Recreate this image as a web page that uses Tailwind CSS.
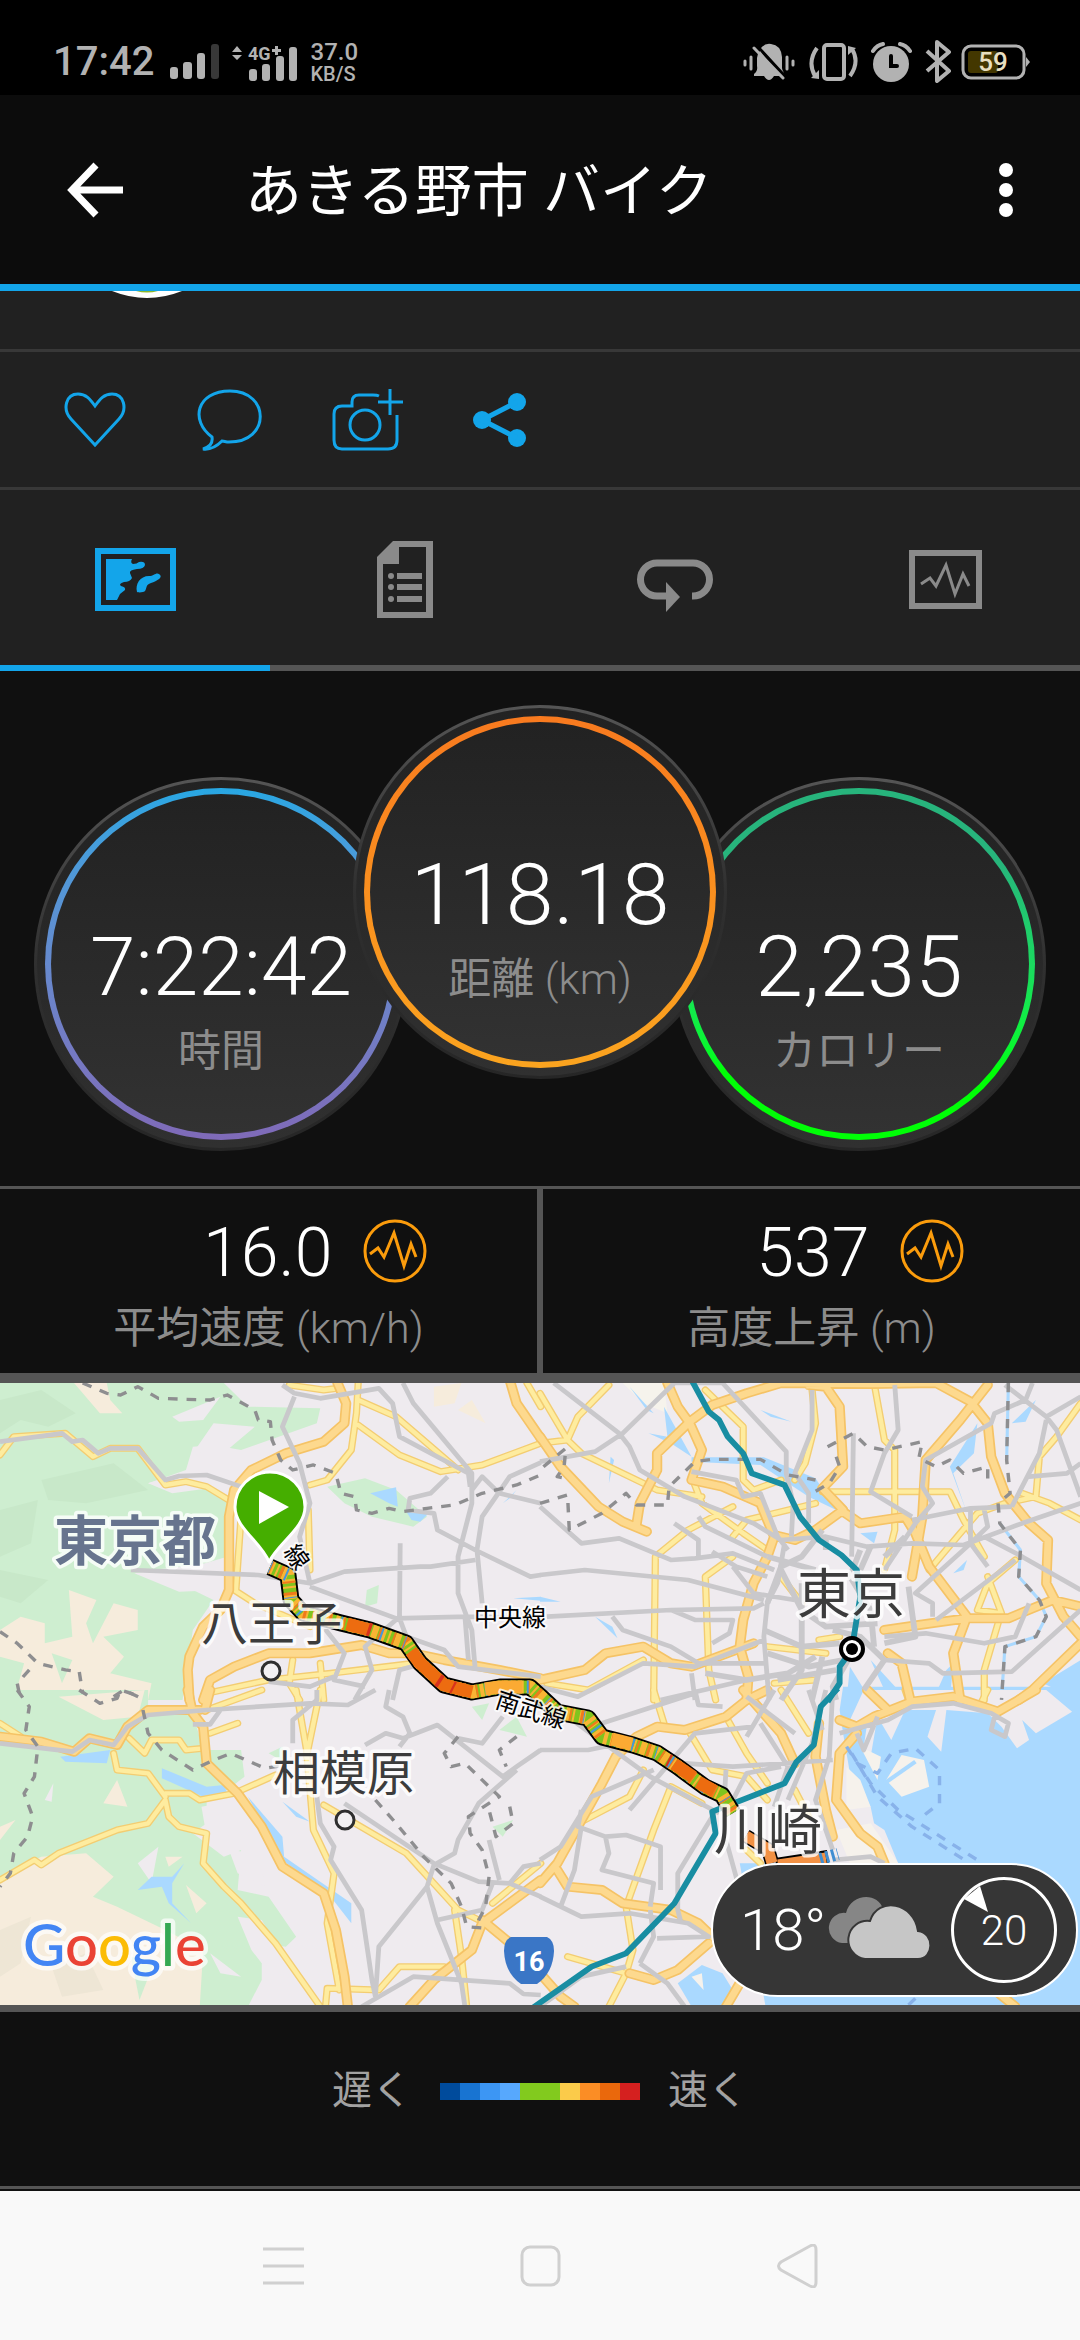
<!DOCTYPE html>
<html lang="ja">

<head>
  <meta charset="utf-8">
  <meta name="viewport" content="width=device-width, initial-scale=1">
  <title>あきる野市 バイク</title>
  <script src="https://cdn.jsdelivr.net/npm/@tailwindcss/browser@4"></script>
</head>

<body class="bg-[#101010] text-white font-['Roboto','Noto_Sans_CJK_JP',sans-serif]">

<!-- status bar -->
<div class="h-[95px] bg-black flex items-center justify-between pl-[53px] pr-[50px] pt-7 text-[#b2b2b2]">
  <div class="flex items-center">
    <span class="text-[40px] leading-10 font-medium">17:42</span>
    <svg class="ml-4 w-[50px] h-9" viewBox="0 0 50 36" fill="currentColor">
      <rect y="23" width="8" height="12" rx="3"/><rect x="13" y="18" width="9" height="17" rx="3"/>
      <rect x="27" y="9" width="8" height="26" rx="3"/><rect x="41" width="8" height="35" rx="3" fill="#383838"/>
    </svg>
    <svg class="ml-3 w-[66px] h-10" viewBox="0 -4 66 40" fill="currentColor">
      <path d="M0 6L5 0l5 6zM0 9l5 5 5-5z"/>
      <text x="16" y="14" font-size="18" font-weight="700">4G</text>
      <path d="M43 0h3v3h3v3h-3v3h-3V6h-3V3h3z"/>
      <rect x="17" y="23" width="8" height="12" rx="3"/><rect x="30" y="18" width="8" height="17" rx="3"/>
      <rect x="44" y="10" width="8" height="25" rx="3"/><rect x="57" y="1" width="8" height="34" rx="3"/>
    </svg>
    <div class="ml-3 flex flex-col font-medium">
      <span class="text-2xl leading-6">37.0</span>
      <span class="text-xl leading-5">KB/S</span>
    </div>
  </div>
  <div class="flex items-center">
    <svg class="w-[53px] h-10" viewBox="0 0 53 40" fill="none" stroke="currentColor" stroke-width="3" stroke-linecap="round">
      <path d="M11 32q4-3 3-8V16Q14 12 17 9L37 34H31Q26 42 21 34H11zM18 6Q22 1 28 2q10 1 11 13v11q0 2 2 5z" fill="currentColor" stroke="none"/>
      <path d="M11 6L40 36M2 19v4M8 15v12M44 15v12M50 19v4"/>
    </svg>
    <svg class="ml-[13px] w-[49px] h-10" viewBox="0 0 49 40" fill="none" stroke="currentColor" stroke-width="4">
      <rect x="15" y="3" width="20" height="34" rx="3"/>
      <path d="M8 6Q-2 20 6 34M41 34Q51 20 43 7"/>
      <path d="M2 36l8 1V28zM47 6l-8-2v9z" fill="currentColor" stroke="none"/>
    </svg>
    <svg class="ml-[13px] w-[41px] h-10" viewBox="0 0 41 40" fill="none" stroke="currentColor" stroke-width="4" stroke-linecap="round">
      <circle cx="20" cy="22" r="18" fill="currentColor" stroke="none"/>
      <path d="M2 9Q6 3 12 2M39 9Q35 3 29 2"/><path d="M20 14v10h6" stroke="#000"/>
    </svg>
    <svg class="ml-[13px] w-[27px] h-[43px]" viewBox="0 0 27 43" fill="none" stroke="currentColor" stroke-width="4" stroke-linejoin="round">
      <path d="M2 11L24 31 12 41V2L24 12 2 31"/>
    </svg>
    <svg class="ml-[9px] w-[69px] h-9" viewBox="0 0 69 36">
      <rect x="2" y="2" width="61" height="32" rx="8" fill="none" stroke="#b2b2b2" stroke-width="3"/>
      <path d="M65 13l4 5-4 5z" fill="#b2b2b2"/>
      <rect x="7" y="7" width="30" height="22" rx="3" fill="#433700"/>
      <text x="32" y="27" font-size="26" font-weight="500" fill="#e8dfc0" text-anchor="middle">59</text>
    </svg>
  </div>
</div>

<!-- app bar -->
<header class="h-[196px] bg-[#0c0c0c] border-b-[7px] border-[#13a5ea] flex items-center pl-[67px] pr-[66px]">
  <button aria-label="戻る">
    <svg class="w-14 h-14" viewBox="0 0 56 56" fill="none" stroke="#fff" stroke-width="7"><path d="M56 28H6M29 3L5 28l24 25"/></svg>
  </button>
  <h1 class="ml-[122px] mt-1 flex-1 text-[57px] leading-[64px]">あきる野市 バイク</h1>
  <button aria-label="メニュー">
    <svg class="w-4 h-14" viewBox="0 0 16 56" fill="#fff"><circle cx="8" cy="8" r="7"/><circle cx="8" cy="28" r="7"/><circle cx="8" cy="48" r="7"/></svg>
  </button>
</header>

<div class="h-[61px] bg-[#212121] border-b-[3px] border-[#383838] pl-28">
  <svg class="w-[70px] h-[7px]" viewBox="0 0 70 7"><path d="M0 0Q35 14 70 0z" fill="#fff"/><path d="M24 0h22q-11 3-22 0z" fill="#8cb82c"/></svg>
</div>

<!-- actions -->
<div class="h-[138px] bg-[#212121] border-b-[3px] border-[#383838] flex items-center gap-[70px] pl-16">
  <button aria-label="いいね">
    <svg class="w-[62px] h-[62px]" viewBox="0 0 62 62" fill="none" stroke="#13a5ea" stroke-width="3"><path d="M31 56L7 30C-2 20 2 5 14 5c8 0 12 5 17 12C36 10 40 5 48 5c12 0 16 15 7 25z"/></svg>
  </button>
  <button aria-label="コメント">
    <svg class="w-[66px] h-[62px]" viewBox="0 0 66 62" fill="none" stroke="#13a5ea" stroke-width="3"><path d="M16 48C-6 32 0 2 34 2c40 0 41 51-1 51-3 0-5-1-7-1-6 6-12 9-19 8 7-2 10-6 9-12z"/></svg>
  </button>
  <button aria-label="写真を追加">
    <svg class="w-[71px] h-[62px]" viewBox="0 0 71 62" fill="none" stroke="#13a5ea" stroke-width="3"><path d="M65 26v25q0 9-9 9H10q-8 0-8-9V25q0-8 8-8h10v-4q0-7 7-7h14q4 0 6 1M58 0v26M46 13h25"/><circle cx="33" cy="36" r="15"/></svg>
  </button>
  <button aria-label="共有">
    <svg class="w-[54px] h-[54px]" viewBox="0 0 54 54" fill="#13a5ea"><circle cx="9" cy="27" r="9"/><circle cx="44" cy="9" r="9"/><circle cx="44" cy="45" r="9"/><path d="M44 9L9 27l35 18" fill="none" stroke="#13a5ea" stroke-width="5"/></svg>
  </button>
</div>

<!-- tabs -->
<nav class="grid grid-cols-4 h-[181px] bg-[#212121]">
  <button class="border-b-[6px] border-[#13a5ea] flex items-center justify-center pt-1" aria-label="マップ">
    <svg class="w-[81px] h-[63px]" viewBox="0 0 81 63" fill="#13a5ea">
      <rect x="3" y="3" width="75" height="57" fill="none" stroke="#13a5ea" stroke-width="6"/>
      <path d="M11 11h26q-2 4 1 5 4 0 6-2 6-1 6 3-1 4-8 4-8 1-7 4l2 5q-2 4-8 4-6 2-3 4 5 1 4 4l-5 4-3 6H11zM42 44c-2-8 3-16 12-16 5 0 7-4 10-2 5 3-2 7-8 9-7 2-3 8-8 9-4 1-6 0-6 0z"/>
    </svg>
  </button>
  <button class="border-b-[6px] border-[#555] flex items-center justify-center pt-1" aria-label="詳細">
    <svg class="w-14 h-[77px]" viewBox="0 0 56 77" fill="#8a8a8a">
      <path d="M16 0h40v77H0V16zM22 6v17H6v48h43V6z" fill-rule="evenodd"/>
      <circle cx="14" cy="35" r="3"/><circle cx="14" cy="46" r="3"/><circle cx="14" cy="58" r="3"/>
      <path d="M20 32h25v6H20zM20 43h25v6H20zM20 55h25v6H20z"/>
    </svg>
  </button>
  <button class="border-b-[6px] border-[#555] flex items-center justify-center pt-4" aria-label="ラップ">
    <svg class="w-[76px] h-[53px]" viewBox="0 0 76 53"><path d="M30 37H20a16 16 0 010-33h36a16 16 0 010 33h-1" fill="none" stroke="#8a8a8a" stroke-width="7"/><path d="M29 23l14 15-14 15z" fill="#8a8a8a"/></svg>
  </button>
  <button class="border-b-[6px] border-[#555] flex items-center justify-center pt-1" aria-label="グラフ">
    <svg class="w-[73px] h-[59px]" viewBox="0 0 73 59" fill="none" stroke="#8a8a8a"><rect x="3" y="3" width="67" height="53" stroke-width="6"/><path d="M12 34l9-6 6 8 10-21 9 29 8-20 6 12" stroke-width="3"/></svg>
  </button>
</nav>

<!-- summary rings -->
<section class="flex justify-center items-start pt-[34px] pb-[35px]">
  <div class="mt-[72px] w-[374px] h-[374px] rounded-full p-[3px] bg-linear-to-b from-[#555] via-[#303030] to-[#262626]">
    <div class="w-full h-full rounded-full p-[8px] bg-linear-to-b from-[#222] to-[#303030]">
      <div class="w-full h-full rounded-full p-[6px] bg-linear-to-b from-[#27a7e3] to-[#7f6ab8]">
        <div class="w-full h-full rounded-full pt-[125px] text-center bg-linear-to-b from-[#222] to-[#323232]">
          <p class="text-[82px] leading-[96px] font-light">7:22:42</p>
          <p class="mt-1.5 text-[43px] leading-[60px] text-[#8c8c8c]">時間</p>
        </div>
      </div>
    </div>
  </div>
  <div class="z-10 -mx-[55px] w-[374px] h-[374px] rounded-full p-[3px] bg-linear-to-b from-[#555] via-[#303030] to-[#262626]">
    <div class="w-full h-full rounded-full p-[8px] bg-linear-to-b from-[#222] to-[#303030]">
      <div class="w-full h-full rounded-full p-[6px] bg-linear-to-b from-[#f87a1f] to-[#fba41f]">
        <div class="w-full h-full rounded-full pt-[125px] text-center bg-linear-to-b from-[#222] to-[#323232]">
          <p class="text-[86px] leading-[96px] font-light">118.18</p>
          <p class="mt-1.5 text-[43px] leading-[60px] text-[#8c8c8c]">距離 <span class="font-light">(km)</span></p>
        </div>
      </div>
    </div>
  </div>
  <div class="mt-[72px] w-[374px] h-[374px] rounded-full p-[3px] bg-linear-to-b from-[#555] via-[#303030] to-[#262626]">
    <div class="w-full h-full rounded-full p-[8px] bg-linear-to-b from-[#222] to-[#303030]">
      <div class="w-full h-full rounded-full p-[6px] bg-linear-to-b from-[#27b47c] from-20% to-[#00ff06] to-80%">
        <div class="w-full h-full rounded-full pt-[125px] text-center bg-linear-to-b from-[#222] to-[#323232]">
          <p class="text-[86px] leading-[96px] font-light">2,235</p>
          <p class="mt-1.5 text-[43px] leading-[60px] text-[#8c8c8c]">カロリー</p>
        </div>
      </div>
    </div>
  </div>
</section>

<!-- averages -->
<section class="grid grid-cols-2 h-[197px] border-t-[3px] border-b-10 border-[#555]">
  <div class="border-r-[3px] border-[#555] pt-[30px]">
    <div class="flex items-center justify-center gap-[30px] h-16 pl-3">
      <span class="w-[210px] pt-1 text-right text-[68px] leading-16 font-light">16.0</span>
      <svg class="w-16 h-16" viewBox="0 0 64 64" fill="none" stroke="#fb9c0c" stroke-width="3"><circle cx="32" cy="32" r="30"/><path d="M7 35l8-6 6 9 10-24 10 33 7-22 5 13"/></svg>
    </div>
    <p class="mt-[15px] text-center text-[43px] leading-[60px] text-[#8c8c8c]">平均速度 <span class="font-light">(km/h)</span></p>
  </div>
  <div class="border-l-[3px] border-[#555] pt-[30px]">
    <div class="flex items-center justify-center gap-[30px] h-16">
      <span class="w-[210px] pt-1 text-right text-[68px] leading-16 font-light">537</span>
      <svg class="w-16 h-16" viewBox="0 0 64 64" fill="none" stroke="#fb9c0c" stroke-width="3"><circle cx="32" cy="32" r="30"/><path d="M7 35l8-6 6 9 10-24 10 33 7-22 5 13"/></svg>
    </div>
    <p class="mt-[15px] text-center text-[43px] leading-[60px] text-[#8c8c8c]">高度上昇 <span class="font-light">(m)</span></p>
  </div>
</section>

<!-- map: four tiles, each drawn in its own 1568x990 units -->
<section class="relative h-[629px] border-b-[7px] border-[#555] overflow-hidden">
  <svg class="w-full h-full" viewBox="0 0 1080 622" preserveAspectRatio="xMidYMid slice" fill="none" stroke-linejoin="round">
    <defs>
      <g id="highways">
        <g transform="translate(0 -13) scale(.3444 .3333)">
          <path d="M980 39L1005 100 1000 160 940 215 830 250 730 300 680 360 665 440 665 660 640 720 590 770 550 860 545 900 550 990M590 990L610 930 680 890 780 850 900 850 1050 825 1130 850 1200 850 1290 870 1450 900 1570 925M1480 30L1500 100 1570 205"/>
        </g>
        <g transform="translate(540 -13) scale(.3444 .3333)">
          <path d="M370 39L400 110 435 160 470 240 440 330 530 350 640 400 680 500 660 560 620 640 590 750 580 830 605 920 600 990M0 200L60 290 170 410 240 455 310 485M280 465L290 400 340 300 340 250 435 155 500 105 600 70 700 39M780 45L830 50 870 110 880 290 820 355 880 420 800 480 740 510 680 495M880 425L930 460 1060 440 1090 490 1130 590 1240 740 1200 850 1220 990M700 39L960 42 1150 39 1250 95 1300 160 1310 260 1350 370 1420 460 1475 510 1470 640 1520 740 1570 800M1300 45L1220 150 1120 270 1110 440 1080 620M1000 780L1100 765 1240 745 1360 745 1490 690 1570 710M0 930L130 900 190 850 300 830 380 880 440 890 620 820M1570 820L1490 900 1430 960 1390 990M1010 850L1050 880 1075 990"/>
        </g>
        <g transform="translate(0 307) scale(.3444 .3333)">
          <path d="M0 140L120 155 215 185 260 145 340 165 370 110 430 60 580 60M545 0L560 70 590 110 600 220 690 310 760 410 820 530 940 610 975 720 1000 860 1010 950M595 60L610 0M1190 950L1260 870 1370 780 1400 700 1570 570M1400 690L1470 750 1570 845"/>
        </g>
        <g transform="translate(540 307) scale(.3444 .3333)">
          <path d="M0 580L50 520 180 280 220 200 280 140 340 110 420 120 540 80 600 30 660 0M50 540L80 590 180 600 240 640 380 660 460 700 500 740M590 0L700 130 740 220M870 90L920 110 970 80 1080 35 1200 20 1330 65 1440 0M920 130L870 190 860 330 930 430 980 470 1000 520M810 100L800 200 830 360 850 440M0 850L60 920 100 950M540 950L580 880M260 850L330 870 400 840 490 760M950 0L1010 60M1320 900L1380 950"/>
        </g>
      </g>
      <g id="roads">
        <g transform="translate(0 -13) scale(.3444 .3333)">
          <path d="M0 255L40 200 190 190 270 260 320 235 400 235 480 345 540 335 600 350 680 400M840 45L940 60 980 55M1040 39L1035 130 1020 240 950 330 900 345M1040 90L1150 140 1330 300M1040 165L1160 255 1280 305 1400 285 1570 220M680 660L740 700 900 770M700 440L685 660M895 420L900 600M600 970L780 930 960 910 1200 880M850 870L840 940 870 990M930 880L940 990M1530 39L1570 110"/>
        </g>
        <g transform="translate(540 -13) scale(.3444 .3333)">
          <path d="M0 70L80 210 120 250 340 360 470 380M200 45L110 140 80 210 0 220M480 60L590 170 590 330 620 360 700 330M740 330L770 280 800 160 790 60M970 39L1000 210 1030 240 1030 480 1000 600M820 365H1190L1230 450 1290 560M1570 100L1500 200 1450 260 1440 380 1350 400 1270 430 1220 490 1130 600M1400 370L1480 400 1570 450M330 990L335 560 430 480 560 410M440 320L470 400 590 490 660 540M510 990L490 900 480 620 560 560M800 400L600 450 560 500M20 940L140 960 300 870M1380 570L1300 640 1270 720 1340 730 1300 620M1330 760L1290 900 1290 990M660 830L830 850M680 940L800 930M700 620L760 700M810 810L870 800"/>
        </g>
        <g transform="translate(0 307) scale(.3444 .3333)">
          <path d="M330 190L340 240 430 250 480 320M480 310L550 310 580 330 680 310 800 255M375 145L420 190 440 150 520 150 540 180 590 175M0 570L100 510 120 525 170 490 340 420 430 400 480 330 490 380 520 410 600 430 590 520 650 590 700 640 800 760 930 950M610 130L690 100M600 60L760 0M860 0L890 180 910 420 970 550 950 700 985 900M930 0L890 200M940 345L1180 490 1330 660 1410 700M1320 660L1340 800 1355 950M945 950L950 895 1100 900 1160 830 1290 830M1570 520L1430 640M0 100L60 140"/>
        </g>
        <g transform="translate(540 307) scale(.3444 .3333)">
          <path d="M330 0L360 100M540 80L600 190 660 280M130 390L260 320 300 240M380 290L330 420 250 650 270 780 250 850 200 950M80 800L250 850M380 290L470 340M1300 0L1280 40M430 120L500 240 600 260 660 330M1060 0L1070 30M600 480L640 520M700 0L780 130M740 300L780 380"/>
        </g>
      </g>
      <g id="route">
        <path d="M270 184L288 192 291 217 303 230 341 240 370 247 406 260 420 280 444 302 472 309 500 304 530 304 540 313 557 329 588 335 602 354 633 362 657 370 678 384 705 404 722 412 733 430"/>
      </g>
    </defs>

    <rect width="1080" height="622" fill="#efebef"/>

    <g transform="translate(0 -13) scale(.3444 .3333)">
      <path fill="#ceeed0" d="M0 39H650L720 110 930 115 920 160 700 240 620 225 560 230 540 300 430 340 600 350 660 380 660 560 560 590 420 600 520 640 620 690 600 720 560 780 530 990H0zM950 350L1060 325 1150 360 1240 440 1200 470 1080 440 1000 400zM1065 660L1100 645 1095 700 1060 710z"/>
      <path fill="#c8e8c9" d="M0 90L120 60 220 130 140 170 60 150 0 190zM120 330L330 280 430 360 250 400 140 390zM0 420L110 390 90 520 0 560zM0 600L140 630 60 700 0 680z"/>
      <path fill="#efebef" d="M500 140L640 80 590 150 520 155zM620 160L740 170 660 240 560 250zM390 610L560 585 640 660 520 665zM430 340L560 300 640 310 640 350 500 370z"/>
      <path fill="#f6ecdc" d="M215 39H310L320 90 355 130 290 130zM0 780L60 740 130 760 130 820 210 800 200 660 280 690 250 760 270 820 330 700 400 720 400 780 300 800 360 860 320 910 440 940 430 990H0zM1260 50L1340 39 1320 100 1260 110zM1330 120L1370 90 1410 160z"/>
      <path fill="#ceeed0" d="M0 860L70 880 40 990H0zM150 850L210 870 180 940z"/>
      <path fill="#aad9ff" d="M1075 370L1150 352 1155 410 1130 400zM1180 425L1245 430 1220 455 1195 450zM1460 400L1500 360 1480 385zM1490 685L1570 680V692z"/>
    </g>
    <g transform="translate(540 -13) scale(.3444 .3333)">
      <path fill="#f6f3ec" d="M240 39H360L370 130 300 100z"/>
      <path fill="#aad9ff" d="M260 50L330 130 310 120zM360 110L440 260 380 220 315 190 370 200zM640 120L730 155 670 140zM440 262H650L800 325 860 420 780 380 640 285 440 275zM1270 160L1190 290 1240 430 1200 310 1260 250zM205 260L215 270 200 340zM0 680L60 695 0 695zM160 740L210 770 225 805zM1570 870L1460 940 1570 992zM890 990L900 890 960 990zM960 870L1040 960 1000 960zM1180 900L1200 880 1190 990 1150 970zM930 490L980 485 970 520zM1200 610L1240 570 1230 600zM1440 90L1370 160 1410 155z"/>
      <path stroke="#aad9ff" stroke-width="9" d="M1360 39L1355 270M1335 460L1395 540 1390 620 1450 690 1470 740 1440 800 1350 830 1340 990"/>
    </g>
    <g transform="translate(0 307) scale(.3444 .3333)">
      <path fill="#ceeed0" d="M0 0H430V60L560 70 590 180 700 180 710 260 660 300 600 330 600 400 560 430 650 500 700 480 690 600 780 620 860 740 830 770 760 760 760 870 720 950H0zM780 190L820 170 830 220zM1370 50L1420 40 1400 90zM1450 120L1500 80 1530 140zM1430 410L1490 390 1460 440z"/>
      <path fill="#efebef" d="M585 350L640 340 650 400 600 440zM690 680L760 690 800 760 760 820 730 780zM400 520L460 470 440 580zM665 480L750 490 770 590 690 550zM130 330L155 280 150 335zM610 790L700 860 640 850z"/>
      <path fill="#f6ecdc" d="M0 560L120 500 250 490 330 560 270 620 340 650 480 720 590 780 580 950H0zM0 410L45 390 0 450zM300 340L340 270 370 350zM540 585L600 640 570 670zM170 20L420 0 400 80 300 90zM480 500L530 500 490 530z"/>
      <path fill="#eee6d5" d="M0 720L90 680 60 820 0 860zM150 830L250 790 300 900 180 920z"/>
      <path fill="#ceeed0" d="M380 800L450 810 405 930z"/>
      <path fill="#aad9ff" d="M175 200L320 180 310 220 190 215zM470 235L600 290 650 285 660 310 590 320 470 265zM720 320L820 440 825 500 1020 640 1020 700 960 620 820 510zM400 600L440 560 500 560 535 520 500 580 500 640 555 700 490 640 470 590zM820 335L900 395 860 380z"/>
    </g>
    <g transform="translate(540 307) scale(.3444 .3333)">
      <path fill="#aad9ff" d="M880 -10H1570V950H655L580 520H1040L1000 420 970 400 960 350 900 250 880 130 870 60zM400 880L470 825 530 850 560 900 530 950H440z"/>
      <path fill="#efebef" d="M940 0H1470L1545 65 1440 130 1400 90 1420 150 1385 175 1340 110 1300 70 1180 60 1165 185 1125 140 1150 60 1060 60 1020 150 980 80 960 200 940 170 950 100 900 90zM560 920L650 900 630 950H570z"/>
      <path fill="#f6f2ec" d="M930 170L990 200 980 270zM1050 195L1115 210 1130 290 1050 320 1005 270zM890 360L960 350 930 270 890 230zM960 400L1040 520H900L860 420zM440 860L470 850 475 900z"/>
      <path stroke="#aad9ff" stroke-width="12" d="M1000 280L1090 215"/>
    </g>

    <g stroke-linecap="round">
      <use href="#roads" stroke="#f3cd72" stroke-width="21"/>
      <use href="#roads" stroke="#feec9f" stroke-width="13"/>
      <use href="#highways" stroke="#f5c366" stroke-width="30"/>
      <use href="#highways" stroke="#fdd98e" stroke-width="20"/>
    </g>

    <!-- railways -->
    <g stroke="#c9c8cb" stroke-width="14">
      <path transform="translate(0 -13) scale(.3444 .3333)" d="M0 215L180 190 210 215 240 210 285 250 320 235 400 235 480 330 520 318 600 315 700 350M855 80L820 170 870 280 900 400 870 500 900 640M820 45L855 70 930 85 1100 55 1140 100 1160 200 1360 310 1365 350M1170 39L1200 100 1370 310 1370 400 1330 560 1330 670 1370 780 1380 900M380 600L750 615 900 640 1000 605 1220 590 1250 590 1380 570M900 650L1150 745 1360 740 1570 745M1300 320L1250 370 1190 385 1185 420 1260 430 1270 480 1380 540 1540 620 1570 615M1370 360L1400 320 1450 370 1570 400M1385 540L1400 440 1480 320 1570 278M1385 540L1400 700M1162 520L1160 740 1060 830 1080 900 1030 990M900 720L1000 850 970 930 1060 950M1140 990L1160 900 1230 880 1260 930M1160 745L1180 800 1290 840 1330 890 1570 920M1350 740L1360 870M780 935L900 950 970 920"/>
      <path transform="translate(540 -13) scale(.3444 .3333)" d="M40 39L230 190 260 230 290 300 420 380 620 460 700 510 830 500 950 530 1080 520 1230 525 1400 460 1570 400M0 275L160 245 240 190 390 39H530L715 245V310L735 400 730 500M790 60V180L740 310 780 370V460M1030 45L1040 180 1000 250 960 365 1080 440M0 410L120 520 230 505 380 570 450 565 560 550 680 600M0 615L130 600 430 630 650 690M20 740L380 720 620 715 650 700M390 460L460 510V570M440 305L570 330 590 380 640 370 690 500 720 540M710 520L690 640 660 700 650 800 665 990M910 190L905 560M1570 80L1470 140 1350 45M1430 39L1410 90 1320 130 1310 160 1120 270 1110 350 1140 400 1090 460 1000 600M1470 140L1500 180 1570 380M1420 320L1530 310 1570 280M1370 410L1250 415 1080 450M1470 150L1450 250 1370 410M1290 500L1400 560 1570 660M1290 420L1300 470 1240 530 1090 670 1140 700V740M1380 570L1150 750M210 740L240 780 380 830 460 880 650 880M380 720L450 750 560 750 550 790 500 820M0 950L110 980 300 880 450 890 650 810M1000 800L1120 790 1290 820 1380 800 1420 700M1000 870L1130 880 1170 910 1370 905 1570 720M440 910L450 990M350 990L600 930M460 440L480 470 660 560M500 545L570 590 660 620M560 590L620 670 740 690M1250 420V520L1300 590"/>
      <path transform="translate(540 -13) scale(.3444 .3333)" stroke-width="17" d="M650 780L760 830 870 820M660 700L700 590 760 560 820 480M700 600L760 720 830 770 980 760M760 640V900L700 990M850 780L930 800 1000 870 940 960M820 860L790 990M900 860L850 950 860 990M660 850L780 890 880 870M690 930L860 900M930 540L900 620 960 720 970 830M960 530L930 600M1060 500L1000 560M1070 650L1090 800 1000 820M480 910L600 930 720 910 800 860M830 540V500M660 560L800 600"/>
      <path transform="translate(0 307) scale(.3444 .3333)" d="M0 160L210 185 260 150 330 165 370 110 430 75 600 60 900 40 1010 45 1090 0M560 103H610L640 60M850 160V90L920 30V0M1060 165L1120 130 1170 145 1270 105 1460 260 1500 230 1570 180M1130 0L1120 50 1170 80 1190 130 1160 170M1330 145L1400 160 1460 80M920 320L930 400 970 470 960 510 1050 660 1080 870 1090 920M1000 340L1260 520 1390 575 1480 580 1570 620M1500 240L1390 340 1330 450 1320 490 1260 525 1240 590 1270 700 1340 880 1350 950M1240 590L1100 770 1090 920M1420 450L1450 570M1270 690L1400 660 1430 580M1050 950L1200 860 1480 880 1520 912 1570 915M1480 580L1520 530 1570 520"/>
      <path transform="translate(540 307) scale(.3444 .3333)" d="M0 180L140 180 280 150M180 100L450 10M80 80L320 260 520 370M540 450L580 600M0 510L60 470 150 320 330 240M120 360L110 410 190 440 250 435 350 470V600M190 440L200 490 180 540 330 580 320 650M120 410L100 540 60 650M500 380L400 550V660L410 700M0 620L120 680 260 670 430 700 490 740 340 745M450 0L460 45 530 50M420 220L560 230 850 210M540 240L535 330M560 330L600 250 700 230M850 0L840 200 800 330 850 480M830 0L790 160 720 330M780 0L820 120M870 130L1010 90 1080 50 1200 40 1310 70 1360 100 1350 140 1310 120 1320 80M600 140L680 0M600 20L740 130M0 950L120 860 250 830M290 820L370 880 420 950M320 660L330 740 290 820M850 510L960 500 1000 520M920 130L940 180 980 80M640 100L720 230 680 350M260 360L450 130 620 110"/>
    </g>

    <!-- boundaries -->
    <g stroke="#8e8e90" stroke-width="10" stroke-dasharray="28 26">
      <path transform="translate(0 -13) scale(.3444 .3333)" d="M240 39L310 70 350 75 400 50 460 85 540 88 610 90 660 75 740 120 750 150 785 155 790 210 815 270 850 300 910 285 975 310 990 370 1030 380 1035 420 1080 430 1130 415 1170 425 1240 415 1320 405 1400 370 1500 345 1570 315M0 785L50 820 110 880 190 900 230 905 240 970M85 900L50 940 60 990M330 980L360 960 410 985"/>
      <path transform="translate(540 -13) scale(.3444 .3333)" d="M10 290L75 235 70 290 50 320 75 325M0 400L80 375 85 480 180 430 250 370 280 405 370 405 375 350 450 275 500 268H640L720 315 800 330M835 230L910 190 950 230 1000 240 1110 215 1100 265 1150 290 1190 270 1230 310 1300 290V330M860 260L870 290 840 340 790 370M1360 39L1355 270 1365 370 1330 400 1335 460 1395 540 1390 620 1450 690 1470 740 1440 800 1350 830 1340 990"/>
      <path transform="translate(0 307) scale(.3444 .3333)" d="M50 0L85 50 75 120 110 170 100 260 70 310 95 380 80 440 40 490 30 550 0 590M230 0L290 40 340 25 350 0 410 20M415 60L430 130 470 180 560 240 610 215 670 190 770 235 830 225M1090 330L1150 400 1230 500 1310 580 1340 650 1355 710 1410 715M1330 140L1290 190 1310 230 1350 220 1450 320 1360 380 1365 430 1400 480 1420 560 1410 650 1380 710M1480 350L1490 400 1440 440 1420 360M1500 140L1450 180 1470 230"/>
      <path transform="translate(540 307) scale(.3444 .3333)" stroke="#88b2ea" d="M890 170L960 280 1040 360 1270 510M905 190L980 320 1080 410 1240 515M920 220L980 250 1020 190 1090 175 1160 240V340L1110 380M1070 945L1090 925"/>
    </g>

    <!-- shinkansen -->
    <path transform="translate(540 -13) scale(.3444 .3333)" stroke="#188da2" stroke-width="17" d="M440 30L490 125 520 150 545 200 590 250 615 310 710 345 755 440 810 510 875 555 920 600 930 680 905 840 870 890V940L835 995"/>
    <path transform="translate(540 307) scale(.3444 .3333)" stroke="#188da2" stroke-width="17" d="M865 -5L815 50 795 165 745 215 710 280 500 365 510 430 390 640 250 790 150 830 -30 960"/>

    <!-- ride, coloured by speed -->
    <use href="#route" stroke="#000" stroke-width="17"/>
    <use href="#route" stroke="#80c41e" stroke-width="13"/>
    <use href="#route" stroke="#f9b434" stroke-width="13" stroke-dasharray="4 3 2 5 6 4"/>
    <use href="#route" stroke="#f07a1c" stroke-width="13" stroke-dasharray="2 9 3 12"/>
    <use href="#route" stroke="#4698d8" stroke-width="13" stroke-dasharray="1 16 2 23"/>
    <path stroke="#ed6c10" stroke-width="13" d="M347 241L370 247M411 268L420 280 444 302 472 309M674 381L693 394M698 399L714 408"/>
    <path stroke="#fbaa33" stroke-width="13" d="M485 306L500 304 522 304M612 356L632 361"/>
    <path stroke="#d8321c" stroke-width="13" d="M368 246l3 1M438 297l3 2M452 304l2 1M668 377l2 1"/>
    <path stroke="#000" stroke-width="14" d="M746 453L768 466 772 480M776 482L828 474"/>
    <path stroke="#f29144" stroke-width="11" d="M746 453L768 466 772 480M778 482L826 475"/>
    <path stroke="#3f8ed2" stroke-width="12" stroke-dasharray="3 3" d="M820 476L838 471"/>

    <!-- places -->
    <g stroke="#2e2e2e" stroke-width="3" fill="#f2f0f2">
      <circle cx="271" cy="288" r="9"/><circle cx="345" cy="437" r="9"/>
    </g>
    <circle cx="852" cy="266" r="11" fill="#fff" stroke="#000" stroke-width="4"/><circle cx="852" cy="266" r="6" fill="#000"/>
    <g fill="#3c3c3c" stroke="#ffffffcc" stroke-width="7" paint-order="stroke" font-family="'Noto Sans CJK JP', sans-serif">
      <text x="54" y="178" font-size="54" font-weight="700" fill="#67748e">東京都</text>
      <text x="201" y="257" font-size="47">八王子</text>
      <text x="797" y="231" font-size="54">東京</text>
      <text x="273" y="407" font-size="47">相模原</text>
      <text x="714" y="467" font-size="54">川崎</text>
      <g font-size="24" fill="#000" stroke-width="4">
        <text x="474" y="243">中央線</text>
        <text transform="translate(494 324) rotate(18)">南武線</text>
        <text transform="translate(283 169) rotate(55)">線</text>
      </g>
    </g>
    <text x="23" y="583" font-size="58" font-family="Lato, sans-serif" font-weight="500" stroke="#ffffffb0" stroke-width="9" paint-order="stroke"><tspan fill="#4285f4">G</tspan><tspan fill="#ea4335">o</tspan><tspan fill="#fbbc05">o</tspan><tspan fill="#4285f4">g</tspan><tspan fill="#34a853">l</tspan><tspan fill="#ea4335">e</tspan></text>
    <path fill="#3a76c6" d="M511 554h36q7 3 7 14-1 22-17 33h-16q-16-11-17-33 0-11 7-14z"/>
    <text x="529" y="588" font-size="27" font-weight="700" fill="#fff" text-anchor="middle">16</text>

    <!-- start pin -->
    <path fill="#45ae00" stroke="#fff" stroke-width="3" d="M269 179C262 160 235 145 235 124a35 35 0 0170 0C305 145 278 160 269 179z"/>
    <path fill="#fff" d="M259 108v33l30-17z"/>
  </svg>

  <div class="absolute right-0.5 bottom-2 w-[367px] h-[134px] rounded-full bg-[#363636] border-2 border-white flex items-center pl-[27px] pr-[19px]">
    <span class="text-[58px] leading-[72px] font-light">18°</span>
    <svg class="mb-1 w-[105px] h-[62px]" viewBox="0 0 105 62">
      <path fill="#868686" d="M16 46A15 15 0 1120 16C25-4 52-5 57 12L45 30 22 46z"/>
      <path fill="#c6c6c6" stroke="#363636" stroke-width="2" d="M39 62A19 19 0 1144 24C52-1 88 5 92 34 109 36 108 62 92 62z"/>
    </svg>
    <div class="relative ml-auto w-[106px] h-[106px] shrink-0 rounded-full border-3 border-white flex items-center justify-center text-[42px] font-light">
      20
      <svg class="absolute left-2.5 top-1.5 w-7 h-7" viewBox="0 0 28 28"><path fill="#fff" d="M0 13L16 0l8 26z"/></svg>
    </div>
  </div>
</section>

<!-- pace legend -->
<div class="h-[177px] border-b-[3px] border-[#555] flex justify-center items-center gap-7 pb-4 text-[40px] leading-[60px] text-[#a2a2a2]">
  <span>遅く</span>
  <div class="flex w-[200px] h-[17px]">
    <i class="flex-1 bg-[#004b9c]"></i><i class="flex-1 bg-[#1874d2]"></i><i class="flex-1 bg-[#3c96f4]"></i><i class="flex-1 bg-[#57a8fd]"></i>
    <i class="flex-1 bg-[#82ca1e]"></i><i class="flex-1 bg-[#82ca1e]"></i><i class="flex-1 bg-[#fbcb4a]"></i><i class="flex-1 bg-[#fb8d25]"></i>
    <i class="flex-1 bg-[#ea680c]"></i><i class="flex-1 bg-[#d5201f]"></i>
  </div>
  <span>速く</span>
</div>

<!-- system navigation -->
<div class="mt-0.5 h-[149px] bg-[#f9f9f9] flex items-center justify-center gap-[216px]">
  <button aria-label="履歴"><svg class="w-[41px] h-[44px]" viewBox="0 0 41 44" stroke="#d0d0d0" stroke-width="3"><path d="M0 5h41M0 22h41M0 39h41"/></svg></button>
  <button aria-label="ホーム"><svg class="w-[41px] h-[44px]" viewBox="0 0 41 44" fill="none" stroke="#d0d0d0" stroke-width="3"><rect x="2" y="3" width="37" height="38" rx="8"/></svg></button>
  <button aria-label="戻る"><svg class="w-[41px] h-[44px]" viewBox="0 0 41 44" fill="none" stroke="#d0d0d0" stroke-width="3"><path d="M33 2q6-3 6 4v32q0 7-6 4L4 26q-5-4 0-8z"/></svg></button>
</div>

</body>

</html>
